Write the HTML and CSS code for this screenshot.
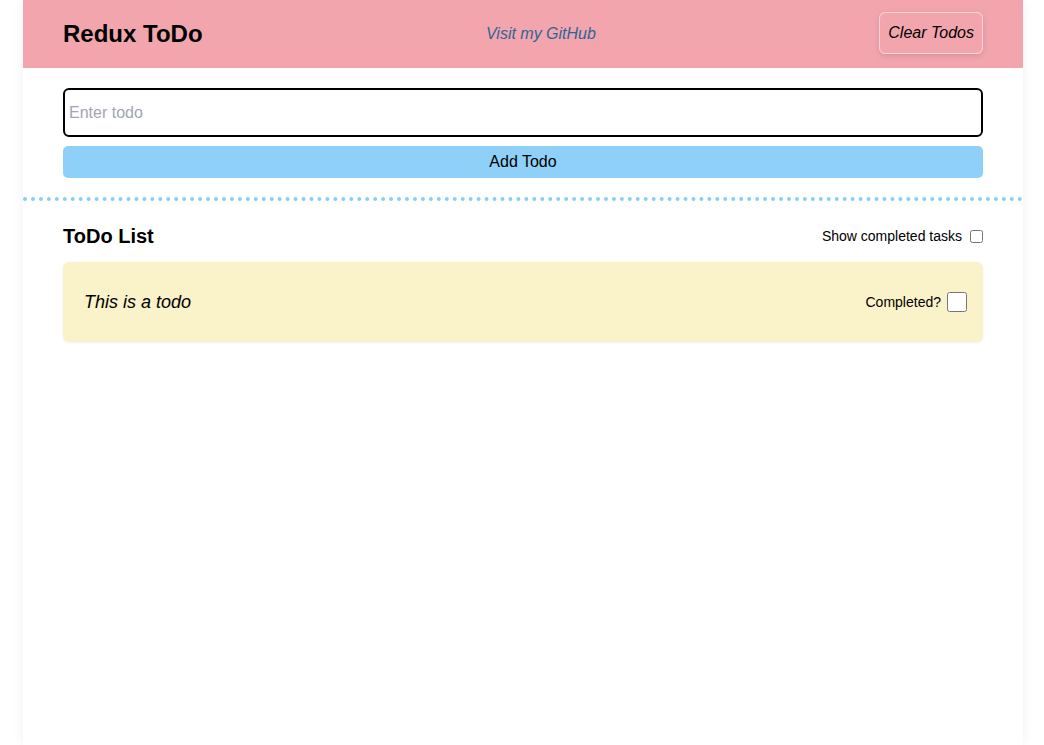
FILE: index.html
```html
<!DOCTYPE html>
<html lang="en">
<head>
<meta charset="utf-8">
<title>Redux ToDo</title>
<link rel="stylesheet" href="styles.css">
</head>
<body>
<div class="app">
  <header class="topbar">
    <h1 class="brand">Redux ToDo</h1>
    <a class="gh-link" href="#">Visit my GitHub</a>
    <button class="clear-btn" type="button">Clear Todos</button>
  </header>
  <form class="add-form">
    <input class="todo-input" type="text" placeholder="Enter todo" autofocus>
    <button class="add-btn" type="button">Add Todo</button>
  </form>
  <section class="list-section">
    <div class="list-head">
      <h2 class="list-title">ToDo List</h2>
      <label class="show-completed">Show completed tasks <input type="checkbox" class="small-check"></label>
    </div>
    <div class="todo-card">
      <span class="todo-text">This is a todo</span>
      <label class="completed">Completed? <input type="checkbox" class="big-check"></label>
    </div>
  </section>
</div>
</body>
</html>
```

FILE: styles.css
```css
html, body {
  margin: 0;
  padding: 0;
  background: #ffffff;
  font-family: "Liberation Sans", Arial, sans-serif;
  color: #000;
}

.app {
  width: 1000px;
  margin: 0 0 0 23px;
  min-height: 745px;
  box-shadow: 0 0 12px rgba(0, 0, 0, 0.06);
  background: #fff;
}

.topbar {
  height: 68px;
  background: #f3a5ae;
  display: flex;
  align-items: center;
  justify-content: space-between;
  padding: 0 40px;
  box-sizing: border-box;
}

.brand {
  margin: 0;
  font-size: 24px;
  font-weight: bold;
  line-height: 28px;
}

.gh-link {
  font-size: 16px;
  font-style: italic;
  color: #2f6496;
  text-decoration: none;
  margin-bottom: 1px;
}

.clear-btn {
  font-family: "Liberation Sans", Arial, sans-serif;
  font-size: 16px;
  font-style: italic;
  color: #000;
  background: transparent;
  border: 1px solid rgba(255, 255, 255, 0.55);
  border-radius: 6px;
  padding: 11px 8px;
  line-height: 18px;
  margin-bottom: 2px;
  box-shadow: 0 2px 6px rgba(0, 0, 0, 0.12);
  cursor: pointer;
}

.add-form {
  display: flex;
  flex-direction: column;
  gap: 9px;
  padding: 20px 40px 19px;
  border-bottom: 4px dotted #87cefa;
}

.todo-input {
  height: 49px;
  box-sizing: border-box;
  border: 2px solid #000;
  border-radius: 6px;
  padding: 0 4px;
  font-family: "Liberation Sans", Arial, sans-serif;
  font-size: 16px;
  outline: none;
}

.todo-input::placeholder {
  color: #a1a5b3;
}

.add-btn {
  height: 32px;
  border: none;
  border-radius: 5px;
  background: #8fd0f9;
  font-family: "Liberation Sans", Arial, sans-serif;
  font-size: 16px;
  color: #000;
  cursor: pointer;
}

.list-section {
  padding: 23px 40px 20px;
}

.list-head {
  display: flex;
  align-items: center;
  justify-content: space-between;
  height: 24px;
  margin-bottom: 14px;
}

.list-title {
  margin: 0;
  font-size: 20px;
  font-weight: bold;
}

.show-completed {
  display: flex;
  align-items: center;
  font-size: 14px;
}

.small-check {
  width: 13px;
  height: 13px;
  margin: 0 0 0 8px;
}

.todo-card {
  height: 80px;
  box-sizing: border-box;
  background: #faf2c8;
  border-radius: 6px;
  box-shadow: 0 1px 3px rgba(0, 0, 0, 0.06);
  display: flex;
  align-items: center;
  justify-content: space-between;
  padding: 0 16px 0 21px;
}

.todo-text {
  font-size: 18px;
  font-style: italic;
}

.completed {
  display: flex;
  align-items: center;
  font-size: 14px;
}

.big-check {
  width: 20px;
  height: 20px;
  margin: 0 0 0 6px;
}
```
